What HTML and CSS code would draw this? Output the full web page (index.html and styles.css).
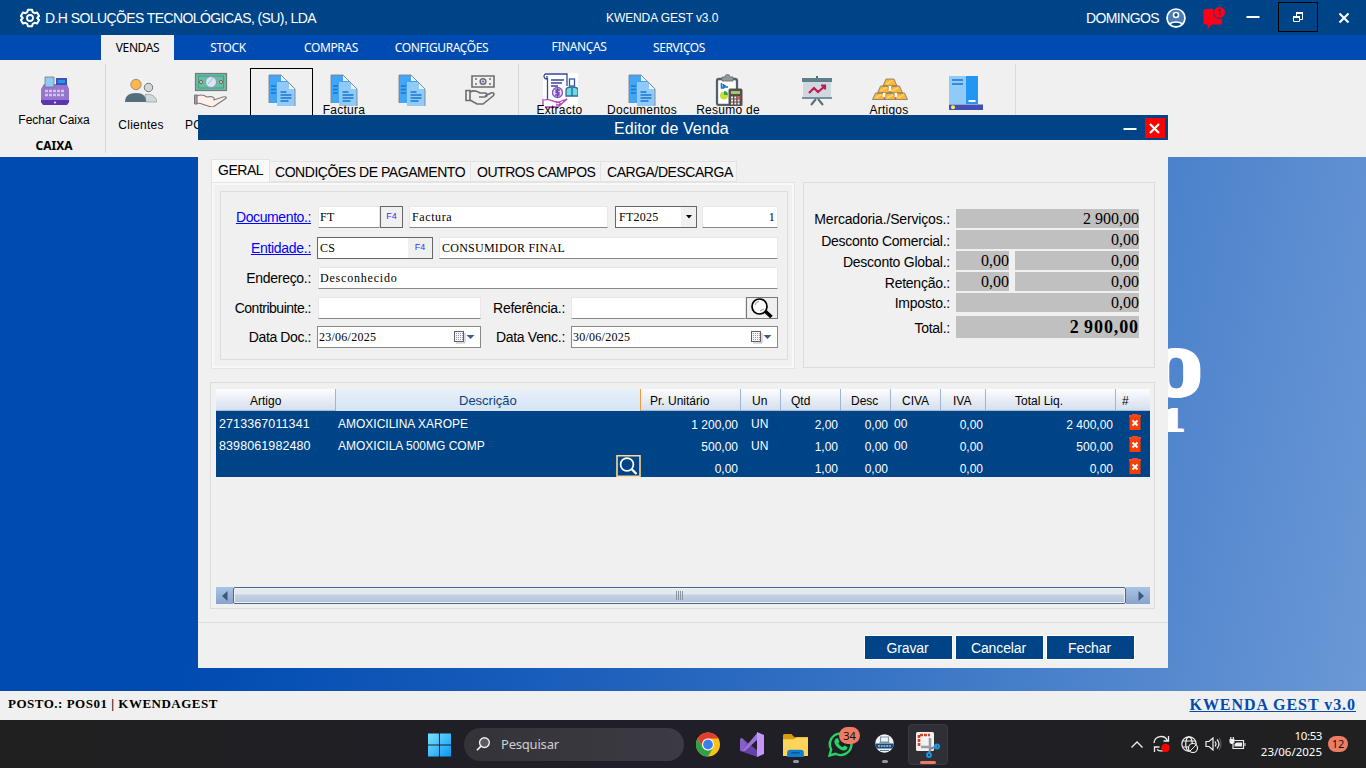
FILE: index.html
```html
<!DOCTYPE html>
<html lang="pt">
<head>
<meta charset="utf-8">
<title>KWENDA GEST v3.0</title>
<link rel="stylesheet" href="styles.css">
</head>
<body>
<svg class="defs" width="0" height="0">
  <defs>
    <symbol id="docs" viewBox="0 0 28 32">
      <path d="M1 1h12l7 7v21H1z" fill="#42a5f5"/>
      <path d="M3 12h5M3 15.500h5M3 19h5" stroke="#1976d2" stroke-width="1.500"/>
      <path d="M9 8h12l6 7v17H9z" fill="#90caf9"/><path d="M13 1v6h6z" fill="#e1f5fe"/><path d="M21 8v7h6z" fill="#e1f5fe"/>
      <path d="M1 29V1h12l7 7 7 7v17" fill="none" stroke="#7c858c" stroke-width=".9"/>
      <path d="M12.500 18h6M12.500 21h11M12.500 24h11M12.500 27h8" stroke="#1976d2" stroke-width="1.300"/>
    </symbol>
    <symbol id="trash" viewBox="0 0 12 16">
      <path d="M.5 3h11v13H.5z" fill="#ff3d00"/><path d="M0 1h3V0h6v1h3v2H0z" fill="#e64a28"/>
      <path d="M3.500 6.500l5 5M8.500 6.500l-5 5" stroke="#fff" stroke-width="1.900"/>
    </symbol>
    <symbol id="cal" viewBox="0 0 22 14">
      <path d="M3 13h9V3" fill="none" stroke="#b9b9b9"/>
      <rect x="1.500" y="1.500" width="9" height="10" fill="#f4f6f8" stroke="#6b5b5b"/>
      <path d="M3 3.500h7M3 5.500h7M3 7.500h7M3 9.500h7" stroke="#8e9bb0" stroke-dasharray="1 1"/>
      <path d="M13.500 5h8l-4 4z" fill="#3f5b8c"/>
    </symbol>
  </defs>
</svg>

<div class="app">
  <header class="titlebar">
    <svg class="gear" viewBox="0 0 24 24"><path d="M9.500 2h5l.8 3 2.200 1.200 3-.8 2.400 4.200-2.200 2.400 2.200 2.400-2.400 4.200-3-.8-2.200 1.200-.8 3h-5l-.8-3-2.200-1.200-3 .8-2.400-4.200L3.300 12 1.100 9.600l2.400-4.200 3 .8L8.700 5z" fill="none" stroke="#fff" stroke-width="2.400" stroke-linejoin="round"/><circle cx="12" cy="12" r="3.600" fill="none" stroke="#fff" stroke-width="2.200"/></svg>
    <span class="company">D.H SOLUÇÕES TECNOLÓGICAS, (SU), LDA</span>
    <span class="product">KWENDA GEST v3.0</span>
    <span class="user">DOMINGOS</span>
    <svg class="avatar" viewBox="0 0 20 20"><circle cx="10" cy="10" r="9" fill="#4a7cb4" stroke="#fff" stroke-width="1.700"/><path d="M3.500 16a8 5 0 0 1 13 0 9 9 0 0 1-13 0z" fill="#004488" stroke="#fff" stroke-width="1.500"/><circle cx="10" cy="7" r="2.500" fill="#004488" stroke="#fff" stroke-width="1.600"/></svg>
    <svg class="bell" viewBox="0 0 24 24"><path d="M4 3h16v15.500H10L5.500 23v-4.500H3.500A2 2 0 0 1 1.500 16V5.500A2.500 2.500 0 0 1 4 3z" fill="#fe0017"/><circle cx="17.500" cy="6.500" r="6" fill="#fe0017" stroke="#004488"/><path d="M16 4.500l2-1v6" fill="none" stroke="#7a1a55" stroke-width="1.300"/></svg>
    <div class="winbtn"><svg viewBox="0 0 14 14"><path d="M.5 7h13" stroke="#fff" stroke-width="2"/></svg></div>
    <div class="winbtn restore"><svg viewBox="0 0 14 14"><path d="M5.500 6V2.500h6V9.500H9M2.500 6.500h6v5h-6z" fill="none" stroke="#fff"/><path d="M5 3h7M2 7h7" stroke="#fff" stroke-width="2"/></svg></div>
    <div class="winbtn close"><svg viewBox="0 0 14 14"><path d="M2.500 2.500l9 9M11.500 2.500l-9 9" stroke="#fff" stroke-width="2.100"/></svg></div>
  </header>

  <nav class="menu">
    <span class="m1">VENDAS</span><span class="m2">STOCK</span><span class="m3">COMPRAS</span><span class="m4">CONFIGURAÇÕES</span><span class="m5">FINANÇAS</span><span class="m6">SERVIÇOS</span>
  </nav>

  <section class="ribbon">
    <div class="tool caixa">
      <svg class="i32" viewBox="0 0 32 32"><path d="M5 9h23l2 5v14H2V14z" fill="#9575cd"/><path d="M2 25h28v2l-2 3H4l-2-3z" fill="#5e35b1"/><path d="M6 2h9v10H6z" fill="#90caf9" stroke="#777" stroke-width=".8"/><path d="M18 4h9v5h-9z" fill="#2196f3" stroke="#3f51b5" stroke-width="2"/><path d="M6 16h20M6 20h20" stroke="#d1c4e9" stroke-width="2.500" stroke-dasharray="3 1"/><circle cx="16" cy="27.500" r="1" fill="#eee"/></svg>
      <span>Fechar Caixa</span><b>CAIXA</b>
    </div>
    <div class="tool clientes">
      <svg class="i32" viewBox="0 0 32 32"><circle cx="11" cy="9.500" r="5.200" fill="#ffb74d" stroke="#777" stroke-width=".7"/><circle cx="23.500" cy="12.500" r="4.200" fill="#cfd8dc" stroke="#777"/><path d="M20 19.500c7-1 11 2 12 7.500H21z" fill="#cfd8dc" stroke="#888" stroke-width=".6"/><path d="M0 27c0-6 4-9 11-9s10 3 10 9z" fill="#546e7a"/></svg>
      <span>Clientes</span>
    </div>
    <div class="tool pos">
      <svg class="i36" viewBox="0 0 36 36"><rect x="2.500" y="2.500" width="31" height="17" fill="#66bfa4" stroke="#777" stroke-width="1.200"/><rect x="5.500" y="5" width="25" height="12" fill="none" stroke="#4d9886"/><circle cx="18" cy="11" r="5.500" fill="#d7e7ef" stroke="#8298bc"/><path d="M15 13l5-6" stroke="#9dbdd4"/><circle cx="8" cy="11" r="1.600" fill="#f2cb72" stroke="#666"/><circle cx="28" cy="11" r="1.600" fill="#f2cb72" stroke="#666"/><path d="M1.500 24h3v9h-3z" fill="#bd8eb5" stroke="#777"/><path d="M4 25c4-2 7-1 10 1 5-1 8 0 7 3l9-3c4-1 4 1 2 2l-12 8c-6 0-10-4-16-4z" fill="#fff0e8" stroke="#777" stroke-width="1.100"/></svg>
      <span>POS</span>
    </div>
    <div class="tool boxed"><svg class="idoc"><use href="#docs"/></svg></div>
    <div class="tool"><svg class="idoc"><use href="#docs"/></svg><span>Factura</span></div>
    <div class="tool doc3"><svg class="idoc"><use href="#docs"/></svg></div>
    <div class="tool hand">
      <svg class="i32" viewBox="0 0 32 32"><g fill="none" stroke="#6d6d6d" stroke-width="1.600"><path d="M8 2h22v11H8zM11 5h2M25 5h2M11 10h2M25 10h2"/><circle cx="19" cy="7.500" r="2.800"/><path d="M2 16.500h4v10H2zM6 18c5-3 8 0 10 1h5c3 0 3 4-1 4h-5M21 22l6-3c3-1 4 1 2 3l-10 8h-6l-7-4"/></g><circle cx="19" cy="7.500" r="1" fill="#4848d8"/></svg>
    </div>
    <div class="tool extracto">
      <svg class="i36" viewBox="0 0 36 36"><path d="M1 1h35v35H1z" fill="#fff"/><g fill="none" stroke-width="1.300"><path d="M5.500 6v21M3 2h22v12M3 2c-2 2-1 5 2 5V4M9 8h13M9 11h11M9 14h7" stroke="#3447a0"/><circle cx="15.500" cy="20.500" r="5" stroke="#8754bd" fill="#eadcff"/><path d="M18 18h-4v2.500h3V23h-4M15.500 16v9" stroke="#7048b5"/><path d="M2 28c6-2 9 2 13 2 5 1 4 3-1 3M14 31l11-4-9 8H3M1 27v7" stroke="#b544b5"/><rect x="27.500" y="7" width="5" height="7" stroke="#315c99"/><path d="M24 24v-6q0-3 6-3t6 3v6z" fill="#66dce5" stroke="#3a669b"/><path d="M30 16v8" stroke="#31589b"/></g></svg>
      <span>Extracto</span>
    </div>
    <div class="tool documentos"><svg class="idoc"><use href="#docs"/></svg><span>Documentos</span></div>
    <div class="tool resumo">
      <svg class="i32" viewBox="0 0 32 32"><rect x="5" y="5" width="20" height="26" rx="2" fill="#fff" stroke="#566069" stroke-width="2.300"/><path d="M10 3h3a2.500 2.500 0 0 1 5 0h3v4H10z" fill="#8e989c" stroke="#777"/><path d="M9.500 9v5h2v-4M13 14v-3M15 14v-2" stroke="#1976d2" stroke-width="1.600" fill="none"/><circle cx="12" cy="21.500" r="4" fill="#cddc39"/><path d="M12 21V17a4 4 0 0 1 4 4z" fill="#32a852"/><rect x="17" y="15" width="13" height="17" rx="1" fill="#5a4a48" stroke="#555"/><path d="M19 17h9v3h-9z" fill="#9ccc65"/><path d="M19 23.500h9M19 26.500h9M19 29.500h9" stroke="#eee" stroke-width="1.800" stroke-dasharray="2 1.300"/><path d="M26 23.500h2.500" stroke="#f44336" stroke-width="2"/></svg>
      <span>Resumo de</span>
    </div>
    <div class="tool board">
      <svg class="i32" viewBox="0 0 32 32"><path d="M2 5h28v19H2z" fill="#cfd8dc"/><path d="M1 4h30v4H1z" fill="#607d8b"/><path d="M1 23h30v2H1z" fill="#78909c"/><path d="M16 2v2M15 25l-5 6M17 25l5 6" stroke="#546e7a" stroke-width="2"/><path d="M8 19l5-5 4 4 7-6M20 11.500h4v4" fill="none" stroke="#c2185b" stroke-width="2.200"/></svg>
    </div>
    <div class="tool artigos">
      <svg class="i36" viewBox="0 0 36 32"><g fill="#ffb434" stroke="#777" stroke-width=".8"><path d="M14 5h8l3 7H11zM8.500 12h7.500l2.500 7H5.500zM20 12h7.500l3 7h-13zM3.500 19H11l2 6.500H.5zM14.500 19h7l2.500 6.500H12zM25 19h7.500l3 6.500H23z"/></g><path d="M18 12v5M12 19v4M24 19v4" stroke="#fff" stroke-width="2.500"/><path d="M14.500 10l6-3.500M8.500 17l6-3.500M20.500 17l6-3.500M3.500 24l6-3.500M15 24l6-3.500M26 24l6-3.500" stroke="#ffd665" stroke-width="1.500"/></svg>
      <span>Artigos</span>
    </div>
    <div class="tool book">
      <svg class="i36" viewBox="0 0 36 36"><path d="M1 1h18v28H1z" fill="#90caf9"/><path d="M18 1h12v28H18z" fill="#2196f3"/><path d="M4 5h11M4 9h11" stroke="#1976d2" stroke-width="1.500"/><path d="M20.500 26h7" stroke="#fff" stroke-width="2"/><path d="M1 29.500h34V35H1z" fill="#3f51b5"/><circle cx="5" cy="32.300" r="2" fill="#ffeb3b"/></svg>
    </div>
  </section>

  <main class="desktop">
    <span class="digit zero">0</span><span class="digit one">1</span>
    <section class="dialog">
      <div class="dlg-title"><span>Editor de Venda</span>
        <svg class="min" viewBox="0 0 14 14"><path d="M.5 7h13" stroke="#fff" stroke-width="2"/></svg>
        <svg class="x" viewBox="0 0 20 20"><path d="M0 0h20v20H0z" fill="#f00"/><path d="M5 6l9 9M14 6l-9 9" stroke="#fff" stroke-width="2.200"/></svg>
      </div>
      <div class="top">
        <div class="tabs-area">
          <div class="tabs"><span class="t1">GERAL</span><span class="t2">CONDIÇÕES DE PAGAMENTO</span><span class="t3">OUTROS CAMPOS</span><span class="t4">CARGA/DESCARGA</span></div>
          <div class="page"><div class="group">
            <div class="row r1"><label class="link">Documento.:</label><div class="field w-ft">FT</div><div class="f4">F4</div><div class="field w-fac">Factura</div><div class="select"><span>FT2025</span><i><svg viewBox="0 0 6 4"><path d="M0 0h6L3 3.500z"/></svg></i></div><div class="field num">1</div></div>
            <div class="row r2"><label class="link">Entidade.:</label><div class="combo"><span>CS</span><em>F4</em></div><div class="field grow">CONSUMIDOR FINAL</div></div>
            <div class="row r3"><label>Endereço.:</label><div class="field grow">Desconhecido</div></div>
            <div class="row r4"><label class="lc">Contribuinte.:</label><div class="field w-con"></div><label class="lab2">Referência.:</label><div class="field w-ref"></div><div class="lens"><svg viewBox="0 0 28 20"><circle cx="12.500" cy="8.500" r="7.500" fill="#fff" stroke="#000" stroke-width="1.700"/><path d="M8 7a4.500 4.500 0 0 1 4-3.500M13 13l4-2" fill="none" stroke="#999"/><path d="M18.500 13.500l6 5.500" stroke="#000" stroke-width="3.600"/></svg></div></div>
            <div class="row r5"><label>Data Doc.:</label><div class="date w-d1"><span>23/06/2025</span><svg><use href="#cal"/></svg></div><label class="lab2">Data Venc.:</label><div class="date grow"><span>30/06/2025</span><svg><use href="#cal"/></svg></div></div>
          </div></div>
        </div>
        <div class="totals">
          <div class="tot"><label class="merc">Mercadoria./Serviços.:</label><output>2 900,00</output></div>
          <div class="tot t-b"><label>Desconto Comercial.:</label><output>0,00</output></div>
          <div class="tot t-b"><label>Desconto Global.:</label><output class="pct">0,00</output><output>0,00</output></div>
          <div class="tot t-b"><label>Retenção.:</label><output class="pct">0,00</output><output>0,00</output></div>
          <div class="tot"><label>Imposto.:</label><output>0,00</output></div>
          <div class="tot grand"><label>Total.:</label><output>2 900,00</output></div>
        </div>
      </div>
      <div class="lines">
        <div class="tr head"><span class="h1">Artigo</span><span class="h2">Descrição</span><span class="h3">Pr. Unitário</span><span class="h4">Un</span><span class="h5">Qtd</span><span class="h6">Desc</span><span class="h7">CIVA</span><span class="h8">IVA</span><span class="h9">Total Liq.</span><span class="h10">#</span></div>
        <div class="tr"><span class="code">2713367011341</span><span class="desc">AMOXICILINA XAROPE</span><span class="n">1 200,00</span><span class="un">UN</span><span class="n">2,00</span><span class="n">0,00</span><span class="civa">00</span><span class="n">0,00</span><span class="n">2 400,00</span><span class="del"><svg><use href="#trash"/></svg></span></div>
        <div class="tr"><span class="code">8398061982480</span><span class="desc">AMOXICILA 500MG COMP</span><span class="n">500,00</span><span class="un">UN</span><span class="n">1,00</span><span class="n">0,00</span><span class="civa">00</span><span class="n">0,00</span><span class="n">500,00</span><span class="del"><svg><use href="#trash"/></svg></span></div>
        <div class="tr"><span></span><span class="find"><svg viewBox="0 0 25 22"><path d="M1 .8h23v20.400H1z" fill="#004488" stroke="#ffd992" stroke-width="1.600"/><circle cx="11" cy="9.500" r="6.400" fill="none" stroke="#fff" stroke-width="1.700"/><path d="M15.500 14l5 5" stroke="#fff" stroke-width="2.400"/></svg></span><span class="n">0,00</span><span></span><span class="n">1,00</span><span class="n">0,00</span><span></span><span class="n">0,00</span><span class="n">0,00</span><span class="del"><svg><use href="#trash"/></svg></span></div>
        <div class="scroll"><i class="sb l"><svg viewBox="0 0 6 10"><path d="M5.500 0v10L0 5z" fill="#44557c"/></svg></i><div class="thumb"><svg viewBox="0 0 8 9"><path d="M.5 0v9M2.500 0v9M4.500 0v9M6.500 0v9" stroke="#8a94a5"/></svg></div><i class="sb r"><svg viewBox="0 0 6 10"><path d="M.5 0v10L6 5z" fill="#44557c"/></svg></i></div>
      </div>
      <div class="actions"><button>Gravar</button><button>Cancelar</button><button>Fechar</button></div>
    </section>
  </main>

  <footer class="status"><span class="post">POSTO.: POS01 | KWENDAGEST</span><span class="brand">KWENDA GEST v3.0</span></footer>

  <div class="taskbar">
    <svg class="win" viewBox="0 0 24 24"><defs><linearGradient id="wg" x2="1" y2="1"><stop stop-color="#7be1fd"/><stop offset="1" stop-color="#0899f5"/></linearGradient></defs><path d="M0 0h11.400v11.400H0zM12.500 0H24v11.400H12.500zM0 12.500h11.400V24H0zM12.500 12.500H24V24H12.500z" fill="url(#wg)"/></svg>
    <div class="search"><svg viewBox="0 0 16 16"><circle cx="9" cy="6.500" r="5.200" fill="#5c5b61" stroke="#eee" stroke-width="1.500"/><path d="M5.300 10.300L1 14.700" stroke="#eee" stroke-width="1.800"/></svg><span>Pesquisar</span></div>
    <svg class="chrome" viewBox="0 0 24 24"><circle cx="12" cy="12" r="12" fill="#fbc116"/><path d="M1.600 6A12 12 0 0 1 22.400 6H12a6 6 0 0 0-5.200 9z" fill="#e33b2e"/><path d="M1.600 6A12 12 0 0 0 12 24l5.200-9a6 6 0 0 1-10.400 0z" fill="#2da04e"/><circle cx="12" cy="12" r="5.900" fill="#fff"/><circle cx="12" cy="12" r="4.900" fill="#3b7ded"/></svg>
    <svg class="vs" viewBox="0 0 24 25"><path d="M0 7l2-1 16 13v6L0 19z" fill="#6542a6"/><path d="M0 7l2-1 5 6-5 7-2-1z" fill="#8661c5"/><path d="M2 19L18 0v7L5 19z" fill="#9b72dc"/><path d="M17 0l7 3v19l-7 3z" fill="#c397fa"/></svg>
    <div class="app-i folder"><svg viewBox="0 0 24 24"><path d="M0 3q0-1 2-1h6l3 3h13v6H0z" fill="#d99a0b"/><path d="M0 7h10l3-2h11v18H0z" fill="#ffd45a"/><path d="M4 24v-4q0-3 3-3h10q3 0 3 3v4z" fill="#127ccf"/><path d="M8 20h8" stroke="#075392" stroke-width="1.300"/></svg><i></i></div>
    <div class="wa"><svg viewBox="0 0 25 25"><path d="M1.500 23.500l1.700-6a10.800 10.800 0 1 1 4.400 4.300z" fill="#1f2026" stroke="#25d366" stroke-width="2.400"/><path d="M8 6.500l2-.3 1.500 3.500-1.200 1.600c1 2 2.400 3.200 4.500 4l1.500-1.800 3.200 1.600c.2 5-7 4-10.500-.3C5.500 11 6 8 8 6.500z" fill="#25d366"/></svg><b>34</b></div>
    <div class="app-i kg"><svg viewBox="0 0 19 19"><circle cx="9.500" cy="9.500" r="9.300" fill="#f1f5f7"/><path d="M.3 9.500h18.400a9.200 9.200 0 0 1-1.500 5H1.800a9.200 9.200 0 0 1-1.500-5z" fill="#174b79"/><path d="M5.500 3h8v5h-8zM4 9h11" fill="none" stroke="#8093a5" stroke-width="1.200"/><path d="M3 12h13" stroke="#fff" stroke-width="1.200" stroke-dasharray="2 .7"/><path d="M5 16.500h9" stroke="#527798"/></svg><i></i></div>
    <div class="snip"><svg viewBox="0 0 24 26"><rect width="18" height="19" rx="1.500" fill="#f1f1f1"/><path d="M3 14V3h11" fill="none" stroke="#d8401f" stroke-width="2.600" stroke-dasharray="3 1"/><path d="M14 6v11M5 15h10" stroke="#969da6" stroke-width="2.600"/><path d="M14 17l7-3M14 17l-1 5" stroke="#7b8995" stroke-width="2"/><circle cx="21" cy="14.500" r="2" fill="none" stroke="#1598e5" stroke-width="2"/><circle cx="13" cy="23" r="2" fill="none" stroke="#1598e5" stroke-width="2"/></svg><i></i></div>
    <div class="tray">
      <svg class="chev" viewBox="0 0 12 7"><path d="M.5 6.500L6 1l5.500 5.500" fill="none" stroke="#eee" stroke-width="1.300"/></svg>
      <svg class="sync" viewBox="0 0 18 18"><path d="M1 8a7 7 0 0 1 13.500-2M15.500 1v5h-5M15 10a7 7 0 0 1-11 4.500M1.500 17v-5h5" fill="none" stroke="#eee" stroke-width="1.300"/><circle cx="12.500" cy="13" r="4.200" fill="#f00"/></svg>
      <svg class="globe" viewBox="0 0 17 17"><g fill="none" stroke="#eee" stroke-width="1.200"><circle cx="8" cy="8" r="7.200"/><ellipse cx="8" cy="8" rx="3.300" ry="7.200"/><path d="M1.500 5h13M1.500 11h13"/></g><circle cx="12" cy="12" r="4.500" fill="#202024" stroke="#eee" stroke-width="1.200"/><path d="M9 15l6-6" stroke="#eee"/></svg>
      <svg class="vol" viewBox="0 0 17 14"><path d="M1 4.500h3l4-3.500v12l-4-3.500H1z" fill="none" stroke="#eee" stroke-width="1.200"/><path d="M10 4.500q2 2.500 0 5M12 2.500q4 4.500 0 9" fill="none" stroke="#eee" stroke-width="1.200"/><path d="M14 .8q4 6 0 12.400" fill="none" stroke="#666"/></svg>
      <svg class="bat" viewBox="0 0 16 14"><path d="M5 3.500h9v8H3.500V7" fill="none" stroke="#eee" stroke-width="1.200"/><path d="M7 5.500h5.500v4H5V7zM15 6h1v3h-1zM0 2h5v3.500L3.500 7h-2L0 5.500zM.7 0h1.200v2H.7zM3.200 0h1.200v2H3.200z" fill="#eee"/></svg>
      <div class="clock"><span class="time">10:53</span><span>23/06/2025</span></div>
      <b class="count">12</b>
    </div>
  </div>
</div>
</body>
</html>
```
FILE: styles.css
```css
* { box-sizing: border-box; }
body { margin: 0; font-family: "Liberation Sans", Arial, sans-serif; color: #000; }
svg { display: block; flex: none; }
.defs { position: absolute; }
.app { width: 1366px; height: 768px; display: flex; flex-direction: column; overflow: hidden; position: relative; white-space: nowrap; }

.titlebar { height: 35px; flex: none; background: #004488; color: #fff; display: flex; align-items: center; padding-left: 20px; font-size: 14px; }
.titlebar > * { flex: none; }
.gear { width: 20px; height: 20px; margin-right: 5px; }
.company { width: 561px; letter-spacing: -.59px; }
.product { width: 480px; font-size: 12px; letter-spacing: -.1px; }
.user { width: 80px; letter-spacing: -.6px; }
.avatar { width: 20px; height: 20px; }
.bell { width: 24px; height: 24px; margin: 0 7px 0 16px; }
.winbtn { width: 40px; height: 30px; display: flex; align-items: center; justify-content: center; margin-top: -1px; }
.winbtn svg { width: 14px; height: 14px; }
.winbtn.restore { border: 1px solid #000; margin: -1px 0 0 5px; }
.winbtn.close { margin: 1px 0 0 6px; }

.menu { height: 25px; flex: none; background: #004bb1; color: #fff; display: flex; padding-left: 101px; font: 12px/25px "Noto Sans", sans-serif; letter-spacing: -.4px; }
.menu span { text-align: center; }
.menu .m1 { width: 73px; background: #f0f0f0; color: #000; }
.m2 { width: 108px; }
.m3 { width: 98px; }
.m4 { width: 123px; }
.m5 { width: 136px; margin-left: 8px; line-height: 24px; }
.m6 { width: 64px; }

.ribbon { height: 97px; flex: none; background: #f0f0f0; display: flex; font-size: 12px; }
.tool { display: flex; flex-direction: column; align-items: center; width: 62px; padding-top: 14px; height: 93px; flex: none; }
.tool span { line-height: 14px; margin-top: -3px; letter-spacing: .25px; }
.i32 { width: 32px; height: 32px; }
.i36 { width: 36px; height: 36px; }
.idoc { width: 28px; height: 32px; }
.tool.caixa { width: 106px; border-right: 1px solid #d9d9d9; margin-top: 4px; height: 89px; padding: 11px 0 0 5px; }
.caixa span { margin: 6px 2px 0 0; letter-spacing: 0; }
.caixa b { margin: 12px 2px 0 0; line-height: 14px; font-family: "Noto Sans", sans-serif; }
.tool.clientes { width: 70px; padding-top: 15px; }
.clientes span { margin-top: 11px; }
.tool.pos { width: 70px; padding-top: 11px; }
.pos span { margin: 11px 26px 0 0; }
.tool.boxed { width: 63px; border: 1px solid #000; margin: 8px 0 0 4px; padding-top: 5px; }
.doc3 { width: 73px; }
.hand { width: 63px; }
.tool.extracto { width: 82px; border-left: 1px solid #d9d9d9; margin: 4px 0 0 7px; padding: 8px 0 0; height: 89px; }
.extracto span { margin-top: -5px; }
.documentos { width: 84px; }
.resumo { width: 88px; }
.board { width: 90px; }
.artigos { width: 56px; }
.artigos .i36 { height: 32px; }
.artigos span { margin-right: 2px; }
.tool.book { width: 98px; border-right: 1px solid #d9d9d9; margin: 4px 0 0; padding: 11px 2px 0 0; height: 89px; }

.desktop { flex: 1; background: linear-gradient(101deg, #004bb1 0%, #004bb1 19%, #1e60bc 48%, #457ec9 76%, #6b98d6 100%); }
.dialog { position: absolute; left: 198px; top: 115px; width: 970px; height: 553px; background: #f0f0f0; }
.digit { position: absolute; color: #fff; transform-origin: 0 0; }
.zero { left: 1149px; top: 350px; font: 900 67px/48px Roboto, sans-serif; -webkit-text-stroke: 1.200px #fff; transform: scaleX(1.4); }
.one { left: 1158px; top: 408px; font: bold 34px/24px "Liberation Serif", serif; -webkit-text-stroke: 1.800px #fff; transform: scaleX(1.6); }

.dlg-title { height: 25px; background: #004488; color: #fff; display: flex; align-items: center; font-size: 16px; padding-left: 416px; }
.dlg-title span { width: 509px; padding-top: 2px; letter-spacing: .05px; }
.min { width: 14px; height: 14px; margin-right: 8px; margin-top: 3px; }
.x { width: 20px; height: 20px; margin-top: 1px; }

.top { display: flex; height: 242px; padding: 19px 0 0 13px; font-size: 14px; }
.tabs-area { width: 584px; }
.tabs { display: flex; align-items: flex-end; height: 23px; font-size: 14px; line-height: 20px; letter-spacing: -.46px; }
.tabs span { height: 21px; border: 1px solid #e3e3e3; border-left: 0; background: #f3f3f3; padding-left: 6px; }
.tabs .t1 { width: 59px; height: 23px; background: #fafafa; border-left: 1px solid #e3e3e3; border-bottom: 0; }
.tabs .t2 { width: 201px; padding-left: 5px; }
.tabs .t3 { width: 130px; }
.tabs .t4 { width: 136px; }
.page { height: 187px; border: 3px solid #f8f8f8; outline: 1px solid #e4e4e4; outline-offset: -1px; padding: 6px 4px 6px 6px; }
.group { height: 169px; width: 568px; border: 1px solid #dcdcdc; padding-top: 14px; }
.row { display: flex; height: 22px; align-items: stretch; font: 12px/20px "Liberation Serif", serif; padding-right: 9px; letter-spacing: .25px; }
.r1 { margin-bottom: 9px; }
.r2, .r3 { margin-bottom: 8px; }
.r4 { margin-bottom: 7px; }
.row label { width: 90px; margin-right: 7px; text-align: right; font: 14px/22px "Liberation Sans", sans-serif; letter-spacing: -.4px; }
.row .lc { letter-spacing: -.5px; }
.r2 label, .r3 label, .row .lab2 { letter-spacing: -.3px; }
.row .link { color: #00f; text-decoration: underline; }
.field { background: #fff; border: 1px solid #e8e8e8; border-bottom-color: #888; padding-left: 2px; overflow: hidden; }
.w-ft, .r3 .field { padding-left: 1px; }
.r3 .field { letter-spacing: .8px; }
.grow { flex: 1; }
.w-ft { width: 62px; }
.f4 { width: 23px; border: 1px solid #666; color: #33f; text-align: center; font: 9px/19px "Liberation Sans", sans-serif; letter-spacing: 0; margin-right: 6px; }
.w-fac { width: 199px; margin-right: 7px; letter-spacing: .6px; }
.select { width: 82px; border: 1px solid #666; background: #fff; display: flex; justify-content: space-between; padding-left: 3px; margin-right: 5px; }
.select i { width: 15px; background: #f0f0f0; display: flex; align-items: center; justify-content: center; }
.select svg { width: 6px; height: 4px; }
.num { width: 76px; text-align: right; padding-right: 2px; }
.combo { width: 116px; border: 1px solid #666; background: #fff; display: flex; justify-content: space-between; padding-left: 2px; margin: 0 6px 0 -1px; }
.combo em { width: 24px; background: #f0f0f0; color: #33f; text-align: center; font: 9px/19px "Liberation Sans", sans-serif; letter-spacing: 0; }
.w-con { width: 163px; }
.row .lab2 { width: 84px; margin-right: 6px; }
.w-ref { width: 175px; }
.lens { flex: 1; border: 1px solid #777; }
.lens svg { width: 28px; height: 20px; }
.date { border: 1px solid #888; background: #fff; display: flex; justify-content: space-between; align-items: center; padding: 0 5px 0 1px; }
.date svg { width: 22px; height: 14px; }
.w-d1 { width: 164px; margin-left: -1px; }

.totals { width: 352px; margin: 23px 0 0 8px; height: 186px; border: 1px solid #dcdcdc; padding: 26px 15px 0 0; }
.tot { display: flex; height: 19px; margin-bottom: 2px; justify-content: flex-end; }
.tot label { flex: 1; text-align: right; margin-right: 6px; line-height: 20px; letter-spacing: -.25px; }
.tot .merc { letter-spacing: -.16px; }
.tot.t-b label { line-height: 22px; }
.tot output { width: 183px; background: #c0c0c0; text-align: right; font: 16px/20px "Liberation Serif", serif; }
.tot .pct { width: 53px; margin-right: 6px; }
.tot .pct + output { width: 124px; }
.tot.grand { margin-top: 4px; height: 22px; }
.grand label { line-height: 24px; }
.tot.grand output { font: bold 18px/22px "Liberation Serif", serif; letter-spacing: .9px; word-spacing: -1px; }

.lines { margin-left: 12px; width: 945px; height: 227px; border: 1px solid #dcdcdc; padding: 6px 4px 0 5px; display: flex; flex-direction: column; font-size: 12px; }
.tr { display: grid; grid-template-columns: 120px 305px 100px 40px 60px 50px 50px 45px 130px 34px; height: 22px; background: #004488; color: #fff; line-height: 26px; }
.head { background: linear-gradient(#fdfdfe, #d5dfee); color: #000; border-bottom: 1px solid #a6bcd6; line-height: 24px; }
.head span { border-right: 1px solid #9ab6d2; }
.head .h1 { padding-left: 34px; }
.head .h2 { padding-left: 123px; font-size: 13px; color: #0b3f7f; background: linear-gradient(#e8f0fa, #d3e3f4); border-right-color: #ef9a3c; }
.h3 { padding-left: 9px; }
.h4 { padding-left: 11px; }
.h5 { padding-left: 10px; }
.h6 { padding-left: 10px; }
.h7 { padding-left: 11px; }
.h8 { padding-left: 12px; }
.h9 { padding-left: 29px; }
.head .h10 { padding-left: 6px; border: 0; }
.code { padding-left: 3px; font-size: 12.500px; letter-spacing: .1px; }
.desc { padding-left: 2px; }
.n { text-align: right; padding-right: 3px; line-height: 28px; }
.un { padding-left: 10px; }
.civa { padding-left: 3px; }
.del { padding: 3px 0 0 13px; }
.del svg { width: 12px; height: 16px; }
.find { display: flex; justify-content: flex-end; }
.find svg { width: 25px; height: 22px; }
.scroll { display: flex; height: 17px; margin-top: 110px; }
.sb { width: 17px; background: linear-gradient(#a9c4e2, #86a3cd); display: flex; align-items: center; justify-content: center; }
.sb.r { width: 24px; padding-left: 6px; }
.sb svg { width: 6px; height: 10px; }
.thumb { flex: 1; border: 1px solid #51638c; border-radius: 2px; background: linear-gradient(#e4e9ee 0 40%, #c5d3e2 45%, #b5c5dc 90%, #f0f0f0 95%); display: flex; align-items: center; justify-content: center; box-shadow: inset 0 0 0 1px #eef2f6; }
.thumb svg { width: 8px; height: 9px; }
.actions { border-top: 1px solid #dcdcdc; margin-top: 13px; padding: 12px 33px 0 0; display: flex; justify-content: flex-end; gap: 2px; }
.actions button { width: 89px; height: 25px; border: 1px solid #fff; background: #004488; color: #fff; font: 14px "Liberation Sans", sans-serif; letter-spacing: -.1px; padding: 1px 2px 0 0; }

.status { height: 29px; flex: none; background: #f0f0f0; display: flex; justify-content: space-between; padding: 0 10px 0 8px; font: bold 13px/25px "Liberation Serif", serif; letter-spacing: .5px; }
.brand { color: #004bb1; font-size: 16px; line-height: 28px; letter-spacing: .95px; text-decoration: underline; }

.taskbar { height: 48px; flex: none; background: linear-gradient(90deg, #202020, #201f28 40%, #201f26 65%, #202020); display: flex; align-items: center; padding-left: 428px; color: #fff; font-family: "Noto Sans", sans-serif; }
.win { width: 23px; height: 24px; margin-right: 13px; margin-top: 1px; }
.search { width: 220px; height: 33px; border-radius: 17px; background: linear-gradient(90deg, #343338, #3c3b44); display: flex; align-items: center; padding-left: 12px; color: #d0d0d0; font-size: 13px; letter-spacing: -.2px; margin: 0 12px 0 0; }
.search svg { width: 15px; height: 16px; margin-right: 10px; }
.chrome { width: 24px; height: 25px; margin: 0 20px 0 0; }
.vs { width: 24px; height: 25px; margin: 0 19px 0 0; }
.app-i { height: 48px; display: flex; flex-direction: column; align-items: center; justify-content: space-between; padding: 12px 0 5px; }
.app-i i { width: 6px; height: 3px; border-radius: 2px; background: #99979d; }
.folder { width: 25px; margin-right: 20px; }
.folder svg { width: 25px; height: 25px; }
.wa { position: relative; margin: 0 22px 0 0; }
.wa svg { width: 25px; height: 25px; }
.wa b { position: absolute; left: 11px; top: -5px; width: 21px; height: 17px; border-radius: 9px; background: #ee7c64; color: #111; font: 11px/17px "Noto Sans", sans-serif; text-align: center; }
.app-i.kg { width: 19px; margin-right: 14px; padding-top: 14px; }
.kg svg { width: 19px; height: 19px; }
.snip { width: 40px; height: 41px; background: #312f36; border: 1px solid #3b3941; border-radius: 4px; display: flex; flex-direction: column; align-items: center; justify-content: space-between; padding-top: 7px; }
.snip svg { width: 24px; height: 26px; }
.snip i { width: 16px; height: 3px; background: #ee7c64; border-radius: 2px; }
.tray { flex: 1; display: flex; align-items: center; justify-content: flex-end; padding-right: 18px; }
.chev { width: 12px; height: 7px; margin-right: 10px; }
.sync { width: 18px; height: 18px; margin-right: 10px; }
.globe { width: 17px; height: 17px; margin-right: 7px; }
.vol { width: 17px; height: 14px; margin-right: 7px; }
.bat { width: 17px; height: 14px; margin-right: 15px; }
.clock { display: flex; flex-direction: column; align-items: flex-end; font-size: 11.500px; line-height: 16px; margin-right: 6px; }
.time { letter-spacing: -.4px; }
.count { width: 20px; height: 16px; border-radius: 8px; background: #ee7c64; color: #111; font: 11px/16px "Noto Sans", sans-serif; text-align: center; }
```
